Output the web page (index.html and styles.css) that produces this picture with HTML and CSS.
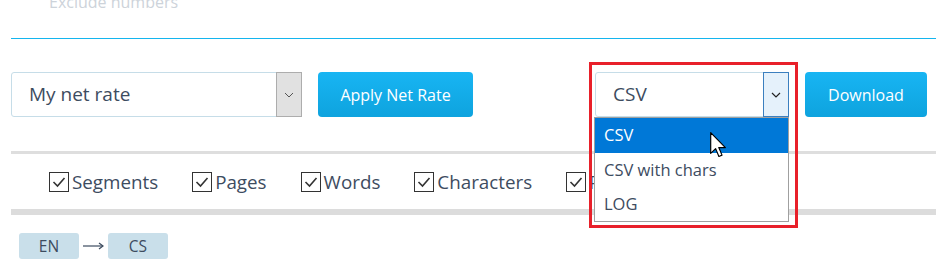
FILE: index.html
```html
<!DOCTYPE html>
<html>
<head>
<meta charset="utf-8">
<link rel="stylesheet" href="styles.css">
</head>
<body>
<div class="top"><span class="excl">Exclude numbers</span></div>
<div class="blue-line"></div>

<div class="controls">
  <div class="group">
    <div class="select rate-select">
      <span class="sel-text">My net rate</span>
      <span class="sel-arrow gray"><svg width="10" height="6" viewBox="0 0 10 6"><polyline points="1,1 5,5 9,1" fill="none" stroke="#555" stroke-width="1"/></svg></span>
    </div>
    <button class="btn btn-apply">Apply Net Rate</button>
  </div>
  <div class="group">
    <div class="export">
      <div class="select export-select">
        <span class="sel-text">CSV</span>
        <span class="sel-arrow blue"><svg width="10" height="6" viewBox="0 0 10 6"><polyline points="1,1 5,5 9,1" fill="none" stroke="#222" stroke-width="1.2"/></svg></span>
      </div>
      <ul class="options">
        <li class="opt active">CSV</li>
        <li class="opt">CSV with chars</li>
        <li class="opt">LOG</li>
      </ul>
      <div class="highlight"></div>
      <svg class="cursor" width="17" height="26" viewBox="0 0 13 20"><path d="M0.5,0.5 L0.5,16.5 L4.3,12.8 L6.8,18.8 L9.2,17.8 L6.7,12 L11.8,12 Z" fill="#fff" stroke="#000" stroke-width="0.9" stroke-linejoin="round"/></svg>
    </div>
    <button class="btn btn-download">Download</button>
  </div>
</div>

<div class="rule"></div>
<div class="checks">
  <label class="chk"><span class="box"><svg width="14" height="12" viewBox="0 0 14 12"><polyline points="1.5,6 5.5,10 12.5,2" fill="none" stroke="#333" stroke-width="1.6"/></svg></span>Segments</label>
  <label class="chk"><span class="box"><svg width="14" height="12" viewBox="0 0 14 12"><polyline points="1.5,6 5.5,10 12.5,2" fill="none" stroke="#333" stroke-width="1.6"/></svg></span>Pages</label>
  <label class="chk"><span class="box"><svg width="14" height="12" viewBox="0 0 14 12"><polyline points="1.5,6 5.5,10 12.5,2" fill="none" stroke="#333" stroke-width="1.6"/></svg></span>Words</label>
  <label class="chk"><span class="box"><svg width="14" height="12" viewBox="0 0 14 12"><polyline points="1.5,6 5.5,10 12.5,2" fill="none" stroke="#333" stroke-width="1.6"/></svg></span>Characters</label>
  <label class="chk"><span class="box"><svg width="14" height="12" viewBox="0 0 14 12"><polyline points="1.5,6 5.5,10 12.5,2" fill="none" stroke="#333" stroke-width="1.6"/></svg></span>Price</label>
</div>
<div class="bar"></div>

<div class="langs">
  <span class="tag">EN</span>
  <svg class="arrow" width="29" height="10" viewBox="0 0 29 10"><line x1="4" y1="5" x2="24" y2="5" stroke="#3d4c5f" stroke-width="1.2"/><polyline points="20,2 24,5 20,8" fill="none" stroke="#3d4c5f" stroke-width="1.2"/></svg>
  <span class="tag">CS</span>
</div>
</body>
</html>
```

FILE: styles.css
```css
* { box-sizing: border-box; }
html, body { margin: 0; padding: 0; background: #fff; }
body {
  width: 936px;
  height: 269px;
  overflow: hidden;
  font-family: "Open Sans", "Noto Sans", sans-serif;
  color: #3d4c5f;
}

.top {
  display: flow-root;
  height: 38px;
  overflow: hidden;
}
.excl {
  display: block;
  margin-top: -6px;
  padding-left: 49px;
  font-size: 16px;
  line-height: 16px;
  color: #cdd3da;
}
.blue-line {
  margin-left: 11px;
  height: 1px;
  background: #14b5ee;
}

.controls {
  display: flex;
  justify-content: space-between;
  margin-top: 33px;
  padding-left: 11px;
  padding-right: 9px;
}
.group { display: flex; align-items: flex-start; }

.select {
  display: flex;
  height: 45px;
  border: 1px solid #c6dde8;
  border-radius: 3px;
  background: #fff;
}
.sel-text {
  flex: 1;
  font-size: 19px;
  line-height: 42px;
  color: #3d4c5f;
}
.sel-arrow {
  width: 26px;
  display: flex;
  align-items: center;
  justify-content: center;
}
.sel-arrow.gray {
  background: #e1e1e1;
  border: 1px solid #adadad;
  margin: -1px -1px -1px 0;
}
.sel-arrow.blue {
  background: #e5f1fb;
  border: 1px solid #3b7fbf;
  margin: -1px -1px -1px 0;
}

.rate-select { width: 291px; }
.rate-select .sel-text { padding-left: 17px; }

.btn {
  height: 45px;
  border: none;
  border-radius: 4px;
  background: linear-gradient(#18b5f3, #0ea3de);
  color: #fff;
  font-family: "Open Sans", "Noto Sans", sans-serif;
  font-size: 16px;
  padding: 0;
  margin-left: 16px;
}
.btn-apply { width: 155px; }
.btn-download { width: 122px; }

.export { position: relative; width: 194px; }
.export-select { width: 194px; }
.export-select .sel-text { padding-left: 17px; }

.options {
  position: absolute;
  left: -1px;
  top: 45px;
  width: 195px;
  margin: 0;
  padding: 0;
  list-style: none;
  background: #fff;
  border: 1px solid #a0a0a0;
  z-index: 3;
}
.opt {
  height: 34px;
  line-height: 34px;
  padding-left: 9px;
  font-size: 16.5px;
  color: #3d4c5f;
}
.opt.active { background: #0078d7; color: #fff; height: 35px; }

.highlight {
  position: absolute;
  left: -6px;
  top: -10px;
  width: 209px;
  height: 166px;
  border: 3px solid #e8202a;
  z-index: 4;
  pointer-events: none;
}
.cursor {
  position: absolute;
  left: 115px;
  top: 60px;
  z-index: 5;
}

.rule {
  margin-top: 34px;
  margin-left: 11px;
  height: 3px;
  background: #dedede;
}
.checks {
  display: flex;
  align-items: center;
  height: 55px;
  padding-left: 49px;
  padding-top: 1px;
  gap: 34px;
}
.chk {
  display: flex;
  align-items: center;
  font-size: 18.8px;
  color: #3d4c5f;
}
.box {
  width: 20px;
  height: 20px;
  border: 1.5px solid #333;
  margin-right: 3px;
  display: flex;
  align-items: center;
  justify-content: center;
}
.bar {
  margin-left: 11px;
  height: 6px;
  background: #dcdcdc;
}

.langs {
  display: flex;
  align-items: center;
  margin-top: 18px;
  padding-left: 19px;
}
.tag {
  width: 60px;
  height: 26px;
  line-height: 26px;
  text-align: center;
  background: #c9dfea;
  border-radius: 3px;
  font-size: 15.5px;
  color: #3d4c5f;
}
```
